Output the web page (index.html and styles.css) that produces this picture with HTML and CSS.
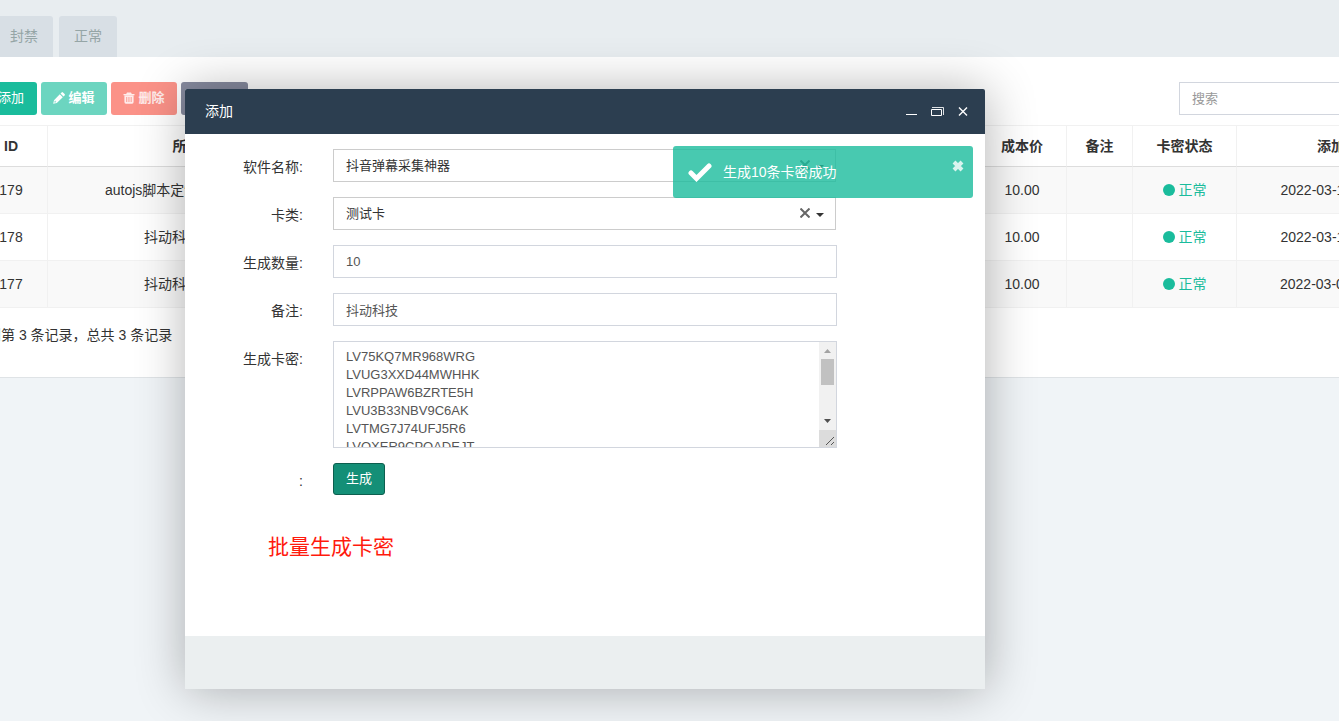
FILE: index.html
```html
<!DOCTYPE html>
<html lang="zh-CN">
<head>
<meta charset="utf-8">
<title>添加</title>
<link rel="stylesheet" href="styles.css">
</head>
<body>
<div class="app">
  <nav class="tabs">
    <a class="tab" href="#">封禁</a>
    <a class="tab" href="#">正常</a>
  </nav>
  <main class="panel">
    <div class="toolbar">
      <button class="btn btn-add" type="button"><svg class="icon" viewBox="0 0 12 12"><path d="M5 1h2v4h4v2H7v4H5V7H1V5h4z"/></svg>添加</button>
      <button class="btn btn-edit" type="button"><svg class="icon" viewBox="0 0 12 12"><path fill-rule="evenodd" d="M.2 11.800 1 8.200 6.800 2.200 9.800 5.200 3.800 11zM7.500 1.500 8.600.4q.8-.6 1.400 0L11.600 2q.6.700 0 1.400l-1.100 1.100zM1.700 8.900l-.3 1.700 1.700-.3v-.9h-.8v-.8z"/></svg>编辑</button>
      <button class="btn btn-delete" type="button"><svg class="icon" viewBox="0 0 12 12"><path fill-rule="evenodd" d="M4 .5h4l.8 1.500h2.700v1.200H.5V2h2.700zM1.400 3.600h9.200V10q0 1.800-1.500 1.800H2.900Q1.400 11.800 1.400 10zM3.300 5v5h.9V5zm2.200 0v5h.9V5zm2.200 0v5h.9V5z"/></svg>删除</button>
      <button class="btn btn-more" type="button">更多</button>
      <input class="search" type="search" placeholder="搜索" aria-label="搜索">
    </div>
    <table class="records">
      <colgroup><col class="c-id"><col class="c-owner"><col><col class="c-cost"><col class="c-note"><col class="c-state"><col class="c-time"></colgroup>
      <thead>
        <tr><th class="id">ID</th><th>所属代理</th><th></th><th>成本价</th><th>备注</th><th>卡密状态</th><th>添加时间</th></tr>
      </thead>
      <tbody>
        <tr><td class="id">179</td><td class="owner-long">autojs脚本定制</td><td></td><td>10.00</td><td></td><td class="state"><i class="dot"></i>正常</td><td>2022-03-11 10:00:00</td></tr>
        <tr><td class="id">178</td><td class="owner">抖动科技</td><td></td><td>10.00</td><td></td><td class="state"><i class="dot"></i>正常</td><td>2022-03-11 10:00:00</td></tr>
        <tr><td class="id">177</td><td class="owner">抖动科技</td><td></td><td>10.00</td><td></td><td class="state"><i class="dot"></i>正常</td><td>2022-03-09 10:00:00</td></tr>
      </tbody>
    </table>
    <p class="summary">到第 3 条记录，总共 3 条记录</p>
  </main>
</div>

<section class="dialog" role="dialog" aria-labelledby="dialog-title">
  <header class="dialog-head">
    <h1 class="dialog-title" id="dialog-title">添加</h1>
    <div class="window-tools">
      <button class="tool" type="button" aria-label="最小化"><svg viewBox="0 0 14 14"><path d="M2 9.500h11"/></svg></button>
      <button class="tool" type="button" aria-label="还原"><svg viewBox="0 0 14 14"><path d="M1.500 4.500h10v6h-10z"/><path d="M2 2.500h11.500V10" opacity=".85"/></svg></button>
      <button class="tool" type="button" aria-label="关闭"><svg viewBox="0 0 14 14"><path d="m3 2.500 8 8M11 2.500l-8 8" stroke-width="1.400"/></svg></button>
    </div>
  </header>
  <form class="form">
    <label for="software">软件名称:</label>
    <div class="select-box">
      <select id="software"><option>抖音弹幕采集神器</option></select>
      <button class="clear" type="button" aria-label="清除"><svg viewBox="0 0 10 10"><path d="m.5.5 9 9M9.500.5l-9 9"/></svg></button><i class="caret"></i>
    </div>
    <label for="kind">卡类:</label>
    <div class="select-box">
      <select id="kind"><option>测试卡</option></select>
      <button class="clear" type="button" aria-label="清除"><svg viewBox="0 0 10 10"><path d="m.5.5 9 9M9.500.5l-9 9"/></svg></button><i class="caret"></i>
    </div>
    <label for="count">生成数量:</label>
    <input id="count" type="text" value="10">
    <label for="note">备注:</label>
    <input id="note" type="text" value="抖动科技">
    <label for="codes">生成卡密:</label>
    <div class="codes-box">
      <textarea id="codes">LV75KQ7MR968WRG
LVUG3XXD44MWHHK
LVRPPAW6BZRTE5H
LVU3B33NBV9C6AK
LVTMG7J74UFJ5R6
LVQXER9CPQADEJT</textarea>
      <div class="scrollbar" aria-hidden="true">
        <svg class="arrow arrow-up" viewBox="0 0 17 17"><path d="M5 11h7L8.500 7z"/></svg>
        <span class="thumb"></span>
        <svg class="arrow" viewBox="0 0 17 17"><path d="M5 6h7L8.500 10z"/></svg>
        <svg class="grip" viewBox="0 0 17 17"><path d="m7 15 8-8M12 15l3-3"/></svg>
      </div>
    </div>
    <label for="generate">:</label>
    <div><button class="generate" id="generate" type="button">生成</button></div>
  </form>
  <p class="caption">批量生成卡密</p>
  <footer class="dialog-foot"></footer>
  <div class="toast" role="status">
    <svg class="check" viewBox="0 0 24 19"><path d="m3 10 5.500 5.500L21 3"/></svg>
    <span class="toast-text">生成10条卡密成功</span>
    <button class="toast-close" type="button" aria-label="关闭"><svg viewBox="0 0 12 12"><path d="m2 2 8 8M10 2l-8 8"/></svg></button>
  </div>
</section>
</body>
</html>
```
FILE: styles.css
```css
* { box-sizing: border-box; }
body {
  margin: 0;
  overflow: hidden;
  background: #f0f4f7;
  color: #333;
  font: 14px/20px "Liberation Sans", "Noto Sans CJK SC", sans-serif;
}
button, input, select, textarea { font: inherit; margin: 0; }
button { padding: 0; border: 0; background: none; color: inherit; }
svg { display: block; fill: currentColor; }

.app { margin: 0 -115px 0 -30px; }
.tabs {
  display: flex;
  gap: 6px;
  padding: 16px 0 0 25px;
  background: #e8edf0;
}
.tab {
  padding: 10px 15px 11px;
  border-radius: 3px 3px 0 0;
  background: #d8dfe5;
  color: #95a5a6;
  text-decoration: none;
}
.panel { background: #fff; border-bottom: 1px solid #dfe3e6; padding: 25px 0 32px; }
.toolbar { display: flex; gap: 4px; padding-right: 15px; margin-bottom: 10px; }
.btn {
  display: flex;
  align-items: center;
  justify-content: center;
  gap: 3px;
  width: 66px;
  height: 33px;
  border-radius: 3px;
  color: #fff;
  font-size: 13px;
  padding-bottom: 2px;
}
.icon { width: 12px; height: 12px; }
.btn-add { width: 67px; background: #1abc9c; }
.btn-edit { background: #6cd5c0; font-weight: bold; }
.btn-delete { background: #fb9288; color: #ffeceb; font-weight: bold; }
.btn-more { width: 67px; background: #878b9f; }
.search {
  width: 260px;
  height: 33px;
  margin-left: auto;
  padding: 0 12px;
  border: 1px solid #d2d6de;
  border-radius: 0;
  font-size: 13px;
  appearance: none;
}
.search::placeholder { color: #999; }

.records { width: 100%; table-layout: fixed; border-spacing: 0; border-top: 1px solid #f1f1f1; }
.c-id { width: 78px; }
.c-owner { width: 306px; }
.c-cost { width: 89px; }
.c-note { width: 66px; }
.c-state { width: 104px; }
.c-time { width: 217px; }
.records th, .records td {
  padding: 0;
  border-right: 1px solid #f1f1f1;
  border-bottom: 1px solid #f1f1f1;
  text-align: center;
  white-space: nowrap;
}
.records th { height: 41px; border-bottom-color: #ddd; }
.records td { height: 47px; }
.records tbody tr:nth-child(odd) { background: #f9f9f9; }
.records .id { padding-left: 5px; }
.records .owner, .records .owner-long { text-align: left; padding-left: 96px; }
.records .owner-long { padding-left: 57px; }
.records .state { color: #1abc9c; }
.dot {
  display: inline-block;
  width: 12px;
  height: 12px;
  margin-right: 4px;
  border-radius: 50%;
  background: #1abc9c;
  vertical-align: -1px;
}
.summary { margin: 17px 0 0; padding-left: 17px; }

.dialog {
  position: absolute;
  top: 89px;
  left: 185px;
  display: flex;
  flex-direction: column;
  width: 800px;
  min-height: 600px;
  border-radius: 2px;
  background: #fff;
  box-shadow: 1px 1px 50px rgba(0, 0, 0, .3);
}
.dialog-head {
  display: flex;
  align-items: center;
  justify-content: space-between;
  height: 45px;
  padding: 0 15px 2px 20px;
  border-radius: 2px 2px 0 0;
  background: #2c3e50;
  color: #fff;
}
.dialog-title { margin: 0; font-size: 14px; font-weight: normal; }
.window-tools { display: flex; gap: 12px; padding-top: 2px; }
.tool svg { width: 14px; height: 14px; fill: none; stroke: #fff; }

.form {
  display: grid;
  grid-template-columns: 118px 1fr;
  gap: 15px 30px;
  padding: 15px 148px 0 0;
}
.form label { padding-top: 8px; text-align: right; line-height: 20px; }
.form input, .form select, .form textarea {
  display: block;
  width: 100%;
  height: 33px;
  padding: 0 12px;
  border: 1px solid #d2d6de;
  border-radius: 0;
  background: #fff;
  color: #555;
  font-size: 13px;
  outline: 0;
}
.select-box { position: relative; padding-right: 1px; }
.form select { appearance: none; border-color: #ccc; color: #333; }
.clear { position: absolute; top: 11px; right: 27px; color: #666; }
.clear svg { width: 10px; height: 10px; fill: none; stroke: currentColor; stroke-width: 2; }
.caret {
  position: absolute;
  top: 16px;
  right: 13px;
  border: 4px solid transparent;
  border-top-color: #333;
  border-bottom: 0;
}
.codes-box { position: relative; }
.form textarea {
  height: 107px;
  padding: 6px 30px 0 12px;
  line-height: 18px;
  overflow: hidden;
  resize: none;
}
.scrollbar {
  position: absolute;
  top: 1px;
  right: 1px;
  bottom: 1px;
  display: flex;
  flex-direction: column;
  width: 17px;
  background: #f1f1f1;
}
.arrow, .grip { width: 17px; height: 17px; fill: #505050; }
.arrow-up { fill: #a3a3a3; }
.thumb { height: 26px; margin: 0 2px 28px; background: #c1c1c1; }
.grip { background: #dcdcdc; fill: none; stroke: #555; }
.generate {
  width: 52px;
  height: 32px;
  border: 1px solid #0d5f4f;
  border-radius: 3px;
  background: #148f77;
  color: #fff;
  font-size: 13px;
}
.caption { margin: 37px 0 0 83px; color: #ff1a0d; font-size: 21px; line-height: 30px; }
.dialog-foot { height: 53px; margin-top: auto; background: #ebeff0; }

.toast {
  position: absolute;
  top: 57px;
  right: 12px;
  display: flex;
  align-items: center;
  gap: 11px;
  width: 300px;
  height: 52px;
  padding: 0 9px 0 15px;
  border-radius: 3px;
  background: rgba(26, 188, 156, .8);
  color: #fff;
}
.check { width: 24px; height: 19px; fill: none; stroke: #fff; stroke-width: 5; stroke-linecap: round; }
.toast-close { align-self: flex-start; margin: 14px 0 0 auto; opacity: .8; }
.toast-close svg { width: 12px; height: 12px; stroke: #fff; stroke-width: 4; }
```
